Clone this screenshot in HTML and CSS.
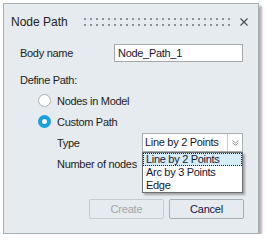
FILE: index.html
```html
<!DOCTYPE html>
<html>
<head lang="en">
    <meta charset="UTF-8">
    <title>Node Path</title>
    <link rel="stylesheet" href="styles.css">
</head>
<body>
<div class="dialog">
    <div class="titlebar">
        <span class="title">Node Path</span>
        <span class="grip"></span>
        <svg class="close" width="8" height="8" viewBox="0 0 8 8">
            <path d="M0.5 0.5 L7.5 7.5 M7.5 0.5 L0.5 7.5" stroke="#4a4a4a" stroke-width="1.1" fill="none"/>
        </svg>
    </div>
    <div class="content">
        <div class="name-row">
            <span>Body name</span>
            <div class="textbox">Node_Path_1</div>
        </div>
        <div class="row group">Define Path:</div>
        <div class="row indent"><span class="radio"></span>Nodes in Model</div>
        <div class="row indent"><span class="radio checked"></span>Custom Path</div>
        <div class="row sub">
            <span class="field-label">Type</span>
            <div class="combo">
                <span class="combo-text">Line by 2 Points</span>
                <span class="combo-btn">
                    <svg width="7" height="6" viewBox="0 0 7 6">
                        <path d="M0.5 0.5 L3.5 3 L6.5 0.5 M0.5 2.8 L3.5 5.3 L6.5 2.8" stroke="#8a8f93" stroke-width="1" fill="none"/>
                    </svg>
                </span>
                <ul class="droplist">
                    <li class="selected">Line by 2 Points</li>
                    <li>Arc by 3 Points</li>
                    <li>Edge</li>
                </ul>
            </div>
        </div>
        <div class="row sub"><span class="field-label">Number of nodes</span></div>
    </div>
    <div class="buttons">
        <button class="btn" disabled>Create</button>
        <button class="btn">Cancel</button>
    </div>
</div>
</body>
</html>
```

FILE: styles.css
```css
* {
    margin: 0;
    padding: 0;
    box-sizing: border-box;
}
body {
    background: #fff;
    font: 11px "Liberation Sans", Arial, sans-serif;
    letter-spacing: -0.3px;
    color: #1c1c1c;
}
/*对话框*/
.dialog {
    width: 256px;
    height: 231px;
    margin: 3px 0 0 3px;
    background: #e5ebee;
    border: 1px solid #a6aeb2;
    box-shadow: 3px 3px 2px rgba(0, 0, 0, 0.3);
}
.titlebar {
    height: 28px;
    display: flex;
    align-items: center;
    padding: 0 10px 0 7px;
}
.title {
    font-size: 12px;
    letter-spacing: 0;
    line-height: 16px;
    color: #222;
    margin-top: 8px;
}
.grip {
    flex: 1;
    height: 12px;
    margin: 8px 0 0 14px;
    background: radial-gradient(circle, #8c8c8c 0.7px, transparent 1.1px);
    background-size: 6px 6px;
    background-position: 0 0;
}
.close {
    margin: 8px 0 0 10px;
}
/*内容*/
.content {
    padding: 12px 14px 0 16px;
}
.name-row {
    height: 18px;
    display: flex;
    align-items: center;
    justify-content: space-between;
}
.textbox {
    width: 129px;
    height: 18px;
    margin-right: 1px;
    background: #fff;
    border: 1px solid #a7a7a7;
    padding-left: 3px;
    line-height: 16px;
    color: #161634;
}
.row {
    height: 21px;
    display: flex;
    align-items: center;
}
.group {
    margin-top: 7px;
}
.indent {
    padding-left: 18px;
}
.radio {
    width: 13px;
    height: 13px;
    border-radius: 50%;
    border: 1px solid #a9aeb1;
    background: #fff;
    margin-right: 6px;
}
.radio.checked {
    border: 4px solid #1a9fe0;
}
.sub {
    padding-left: 37px;
}
.field-label {
    width: 85px;
}
.combo {
    position: relative;
    width: 101px;
    height: 19px;
    align-self: flex-start;
    margin-top: 1px;
    background: #fff;
    border: 1px solid #a9aeb1;
    display: flex;
    color: #161634;
}
.combo-text {
    flex: 1;
    line-height: 17px;
    padding-left: 2px;
}
.combo-btn {
    width: 15px;
    border-left: 1px solid #c6cbce;
    display: flex;
    align-items: center;
    justify-content: center;
}
/*下拉列表*/
.droplist {
    position: absolute;
    left: 0;
    top: 18px;
    width: 101px;
    height: 41px;
    margin-left: -1px;
    list-style: none;
    background: #fff;
    border: 1px solid #6e6e6e;
    box-shadow: 2px 2px 2px rgba(0, 0, 0, 0.3);
    padding-top: 0;
}
.droplist li {
    height: 13px;
    line-height: 12px;
    padding-left: 3px;
    color: #161634;
}
.droplist li.selected {
    background: #d5ecfa;
    border: 1px dotted #222;
    padding-left: 2px;
    line-height: 11px;
}
/*按钮*/
.buttons {
    display: flex;
    justify-content: flex-end;
    gap: 5px;
    padding-right: 14px;
    margin-top: 25px;
}
.btn {
    width: 75px;
    height: 20px;
    background: #e5ebee;
    border: 1px solid #a8aeb2;
    border-radius: 2px;
    font: 11px "Liberation Sans", Arial, sans-serif;
    letter-spacing: -0.2px;
    color: #14144a;
}
.btn[disabled] {
    color: #a2a6a9;
    border-color: #c6cbce;
}
```
